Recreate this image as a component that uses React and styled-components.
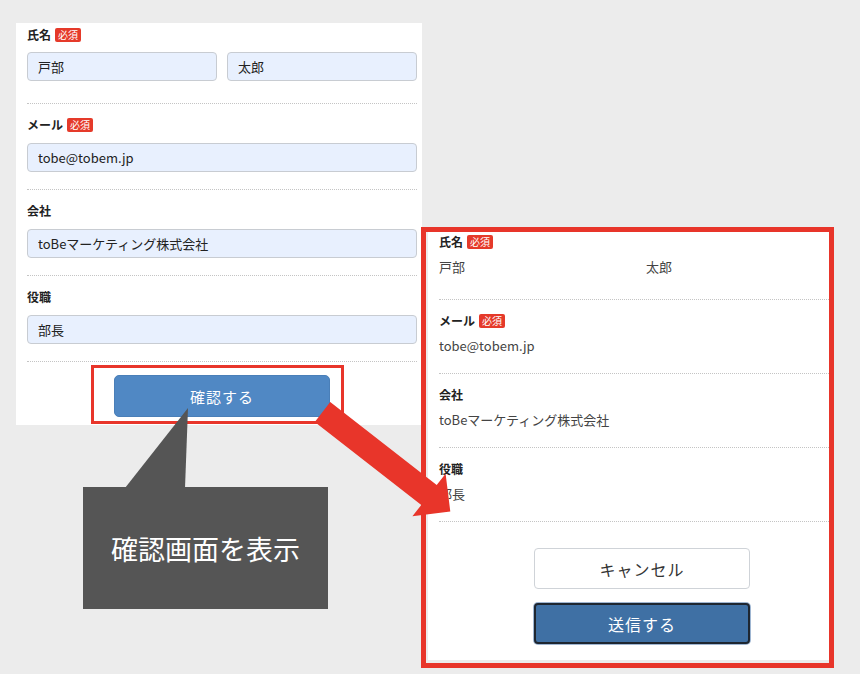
import React from 'react'
import styled, { createGlobalStyle } from 'styled-components'

const GlobalStyle = createGlobalStyle`
  html, body {
    margin: 0;
    padding: 0;
    background: #ececec;
  }
  * {
    box-sizing: border-box;
  }
`

const FONT = `"Noto Sans CJK JP", "Noto Sans", sans-serif`
const RED = '#e8352a'

const Canvas = styled.div`
  position: relative;
  width: 860px;
  height: 674px;
  overflow: hidden;
  background: #ececec;
  display: flex;
  align-items: flex-start;
  padding: 23px 0 0 16px;
  font-family: ${FONT};
  color: #333;
`

/* ---- left: input form screenshot ---- */
const FormPanel = styled.div`
  width: 406px;
  height: 402px;
  background: #fff;
  padding: 0 5px 0 11px;
`

const Field = styled.div`
  padding: ${p => (p.first ? '5px 0 22px' : '14px 0 17px')};
  border-bottom: 1px dotted #c4c4c4;
`

const LabelRow = styled.div`
  display: flex;
  align-items: center;
  gap: 4px;
  height: 14px;
  margin-bottom: ${p => p.gap || 11}px;
  font-size: 12px;
  font-weight: bold;
  line-height: 14px;
  color: #222;
`

const Badge = styled.span`
  display: inline-block;
  height: 14px;
  padding: 0 3px;
  background: #e53a2a;
  color: #fff;
  border-radius: 2px;
  font-size: 10px;
  font-weight: normal;
  line-height: 14px;
`

const InputRow = styled.div`
  display: grid;
  grid-template-columns: ${p => (p.split ? '1fr 1fr' : '1fr')};
  gap: 10px;
`

const TextInput = styled.input`
  width: 100%;
  height: 29px;
  padding: 0 10px;
  background: #e8f0fe;
  border: 1px solid #c8ccd2;
  border-radius: 4px;
  font-family: ${FONT};
  font-size: 13px;
  color: #222;
  outline: none;
`

const Highlight = styled.div`
  width: 253px;
  margin: 3px 0 0 64px;
  padding: 7px 11px 4px 20px;
  border: 3px solid ${RED};
`

const ConfirmButton = styled.button`
  display: block;
  width: 216px;
  height: 42px;
  border: 1px solid #4a7fb8;
  border-radius: 5px;
  background: #5088c4;
  color: #fff;
  font-family: ${FONT};
  font-size: 15px;
  letter-spacing: 1px;
`

/* ---- right: confirmation screenshot ---- */
const Frame = styled.div`
  width: 413px;
  height: 441px;
  margin: 204px 0 0 -1px;
  border: 5px solid ${RED};
  background: #ececec;
  padding: 0 0 3px 2px;
  display: flex;
`

const ConfirmPanel = styled.div`
  flex: 1;
  background: #fff;
  padding-left: 11px;
`

const ConfirmField = styled.div`
  padding: ${p => (p.first ? '3px 0 22px' : '14px 0 17px')};
  border-bottom: 1px dotted #c4c4c4;
`

const ValueRow = styled.div`
  display: grid;
  grid-template-columns: ${p => (p.split ? '207px 1fr' : '1fr')};
  height: 20px;
  font-size: 13px;
  line-height: 20px;
  color: #444;
`

const Actions = styled.div`
  display: flex;
  flex-direction: column;
  gap: 14px;
  padding: 26px 0 0 95px;
`

const ActionButton = styled.button`
  width: 216px;
  height: 41px;
  border-radius: 4px;
  font-family: ${FONT};
  font-size: 16px;
  letter-spacing: 1px;
  border: ${p => (p.primary ? '2px solid #1e2630' : '1px solid #cfd3d8')};
  background: ${p => (p.primary ? '#3f70a4' : '#fff')};
  color: ${p => (p.primary ? '#fff' : '#333')};
  box-shadow: ${p => (p.primary ? '0 0 0 1px #9fb6d2' : 'none')};
`

/* ---- annotations ---- */
const Overlay = styled.svg`
  position: absolute;
  left: 0;
  top: 0;
  pointer-events: none;
`

const Callout = styled.div`
  position: absolute;
  left: 83px;
  top: 487px;
  width: 245px;
  height: 122px;
  background: #555;
  color: #fff;
  display: flex;
  align-items: center;
  justify-content: center;
  font-size: 27px;
  letter-spacing: 0;
`

function FormField({ label, required, values, first }) {
  return (
    <Field first={first}>
      <LabelRow gap={first ? 10 : 11}>
        {label}
        {required && <Badge>必須</Badge>}
      </LabelRow>
      <InputRow split={values.length > 1}>
        {values.map(v => (
          <TextInput key={v} defaultValue={v} readOnly />
        ))}
      </InputRow>
    </Field>
  )
}

function ConfirmRow({ label, required, values, first }) {
  return (
    <ConfirmField first={first}>
      <LabelRow gap={8}>
        {label}
        {required && <Badge>必須</Badge>}
      </LabelRow>
      <ValueRow split={values.length > 1}>
        {values.map(v => (
          <span key={v}>{v}</span>
        ))}
      </ValueRow>
    </ConfirmField>
  )
}

const fields = [
  { label: '氏名', required: true, values: ['戸部', '太郎'] },
  { label: 'メール', required: true, values: ['tobe@tobem.jp'] },
  { label: '会社', values: ['toBeマーケティング株式会社'] },
  { label: '役職', values: ['部長'] },
]

export default function App() {
  return (
    <>
      <GlobalStyle />
      <Canvas>
        <FormPanel>
          {fields.map((f, i) => (
            <FormField key={f.label} first={i === 0} {...f} />
          ))}
          <Highlight>
            <ConfirmButton>確認する</ConfirmButton>
          </Highlight>
        </FormPanel>

        <Frame>
          <ConfirmPanel>
            {fields.map((f, i) => (
              <ConfirmRow key={f.label} first={i === 0} {...f} />
            ))}
            <Actions>
              <ActionButton>キャンセル</ActionButton>
              <ActionButton primary>送信する</ActionButton>
            </Actions>
          </ConfirmPanel>
        </Frame>

        <Overlay width="860" height="674" viewBox="0 0 860 674">
          <polygon points="125,488 188,408 185,488" fill="#555" />
          <polygon
            points="330.2,402.1 436.7,485.1 445.6,473.7 450.3,511.6 412.4,516.3 421.3,504.9 314.8,421.9"
            fill={RED}
          />
        </Overlay>
        <Callout>確認画面を表示</Callout>
      </Canvas>
    </>
  )
}
